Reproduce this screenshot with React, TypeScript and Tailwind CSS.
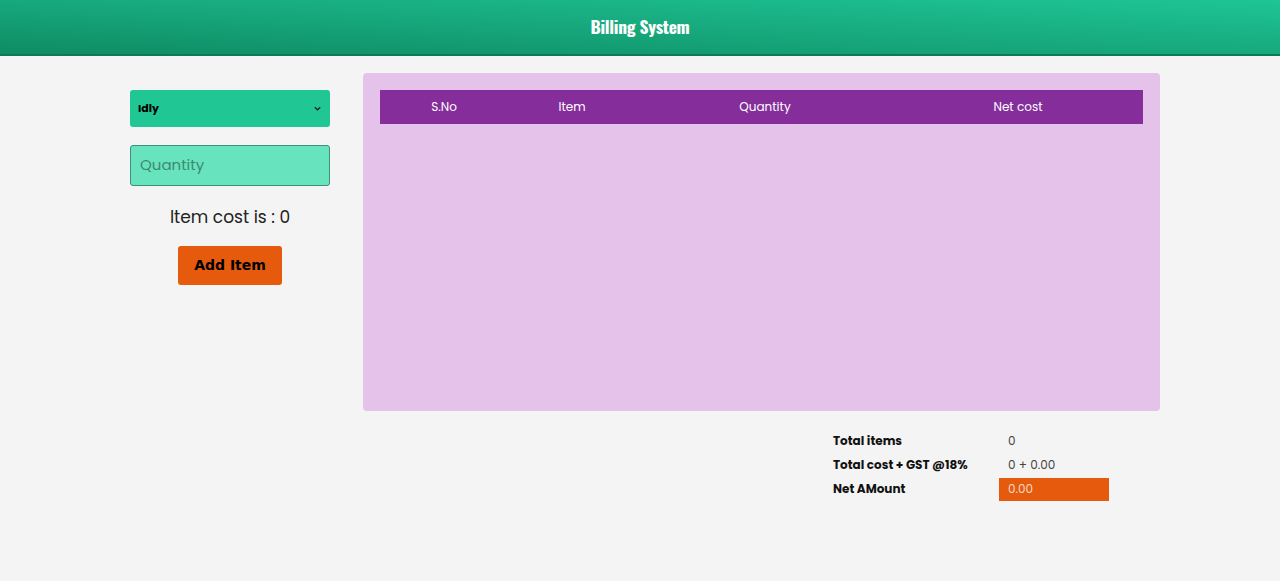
import React from "react";

export default function App() {
  const font = { fontFamily: "Poppins, 'Open Sans', 'Noto Sans', sans-serif" };
  return (
    <div className="min-h-[581px] w-full bg-[#f4f4f4]" style={font}>
      <header className="h-[56px] w-full bg-gradient-to-tr from-[#0f8c63] via-[#17a97d] to-[#1ec595] border-b-[2px] border-[#0d7a57] flex items-center justify-center">
        <h1
          className="text-white text-[17.5px] font-bold tracking-[-0.3px] -mt-[1px]"
          style={{ fontFamily: "Oswald, 'Liberation Sans Narrow', 'DejaVu Sans Condensed', sans-serif" }}
        >
          Billing System
        </h1>
      </header>
      <div className="flex pt-[17px]">
        <div className="ml-[130px] w-[200px] pt-[17px] flex flex-col items-center">
          <div className="w-[200px] h-[37px] bg-[#20c795] rounded-[3px] flex items-center justify-between px-[8px]">
            <span className="text-[11px] font-bold text-black">Idly</span>
            <svg width="9" height="9" viewBox="0 0 10 10" fill="none">
              <path d="M2 3.5 L5 6.5 L8 3.5" stroke="#222" strokeWidth="1.5" />
            </svg>
          </div>
          <div className="mt-[18px] w-[200px] h-[41px] bg-[#67e3bd] border-[1.5px] border-[#3f8f73] rounded-[3px] flex items-center px-[9px]">
            <span className="text-[15px] text-[#3e8a6f]">Quantity</span>
          </div>
          <div className="mt-[18px] text-[17px] text-[#222] leading-[26px]">Item cost is : 0</div>
          <button
            className="mt-[16px] w-[104px] h-[39px] bg-[#e65a0e] rounded-[3px] text-[14px] font-bold text-black"
            style={{ fontFamily: "Tahoma, 'DejaVu Sans', Verdana, sans-serif" }}
          >
            Add Item
          </button>
        </div>
        <div className="ml-[33px] flex flex-col">
          <div className="w-[797px] h-[338px] bg-[#e4c2ea] rounded-[4px] p-[17px]">
            <div className="h-[34px] bg-[#852e9b] grid grid-cols-[128px_128px_258px_248px] items-center text-white text-[12px]">
              <div className="text-center">S.No</div>
              <div className="text-center">Item</div>
              <div className="text-center">Quantity</div>
              <div className="text-center">Net cost</div>
            </div>
          </div>
          <div className="ml-[470px] mt-[18px] text-[12px]">
            <div className="flex h-[24px] items-center">
              <div className="w-[166px] font-bold text-[#111]">Total items</div>
              <div className="pl-[9px] text-[#444]">0</div>
            </div>
            <div className="flex h-[24px] items-center">
              <div className="w-[166px] font-bold text-[#111]">Total cost + GST @18%</div>
              <div className="pl-[9px] text-[#444]">0 + 0.00</div>
            </div>
            <div className="flex h-[24px] items-center">
              <div className="w-[166px] font-bold text-[#111]">Net AMount</div>
              <div className="w-[110px] h-[23px] bg-[#e65a0e] flex items-center pl-[9px] text-[#f6d9c6]">0.00</div>
            </div>
          </div>
        </div>
      </div>
    </div>
  );
}
